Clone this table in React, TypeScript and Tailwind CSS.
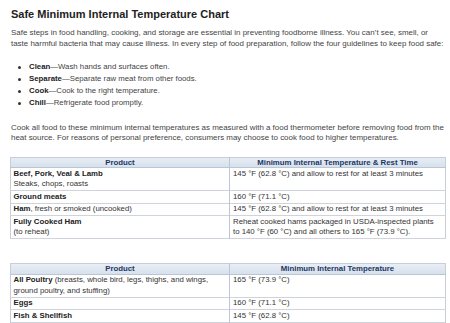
import React from "react";

const Row = ({ left, right }: { left: React.ReactNode; right: React.ReactNode }) => (
  <tr className="border-b border-[#cfd4dc]">
    <td className="w-[219px] border-r border-[#bfc4dc] px-[2.5px] pt-[0.75px] pb-[0.25px] align-top leading-[10.5px]">{left}</td>
    <td className="px-[3px] pt-[0.75px] pb-[0.25px] align-top leading-[10.5px]">{right}</td>
  </tr>
);

const Header = ({ right }: { right: string }) => (
  <tr className="border-b border-[#b9c6d6] bg-gradient-to-b from-[#e8eef5] to-[#d7e1ec]">
    <th className="w-[219px] border-r border-[#bfc4dc] py-0 text-center font-bold leading-[9.5px] text-[#1c3763]">Product</th>
    <th className="py-0 text-center font-bold leading-[9.5px] text-[#1c3763]">{right}</th>
  </tr>
);

export default function App() {
  const items: [string, string][] = [
    ["Clean", "Wash hands and surfaces often."],
    ["Separate", "Separate raw meat from other foods."],
    ["Cook", "Cook to the right temperature."],
    ["Chill", "Refrigerate food promptly."],
  ];
  return (
    <div
      className="h-[323px] w-[450px] overflow-hidden bg-white pl-[11px] text-[#3a3a3a]"
      style={{ fontFamily: '"Liberation Sans", Arial, sans-serif' }}
    >
      <h1 className="pt-[7px] text-[11px] font-bold leading-[14px] text-[#222]">Safe Minimum Internal Temperature Chart</h1>
      <p className="mt-[7px] whitespace-nowrap text-[7.95px] leading-[10.5px] text-[#444]">
        Safe steps in food handling, cooking, and storage are essential in preventing foodborne illness. You can’t see, smell, or
        <br />
        taste harmful bacteria that may cause illness. In every step of food preparation, follow the four guidelines to keep food safe:
      </p>
      <ul className="mt-[12px] text-[7.8px] leading-[12px] text-[#444]">
        {items.map(([b, t]) => (
          <li key={b} className="flex items-center">
            <span className="ml-[7px] mr-[8px] h-[3px] w-[3px] rounded-full bg-[#333]" />
            <span>
              <b className="text-[#222]">{b}</b>—{t}
            </span>
          </li>
        ))}
      </ul>
      <p className="mt-[13.5px] whitespace-nowrap text-[7.95px] leading-[10.5px] text-[#444]">
        Cook all food to these minimum internal temperatures as measured with a food thermometer before removing food from the
        <br />
        heat source. For reasons of personal preference, consumers may choose to cook food to higher temperatures.
      </p>
      <table className="-ml-[1px] mt-[13px] w-[436px] table-fixed border-collapse border border-[#c7ceda] text-[7.8px] text-[#333]">
        <tbody>
          <Header right="Minimum Internal Temperature & Rest Time" />
          <Row
            left={
              <>
                <b className="text-[#222]">Beef, Pork, Veal &amp; Lamb</b>
                <br />
                Steaks, chops, roasts
              </>
            }
            right="145 °F (62.8 °C) and allow to rest for at least 3 minutes"
          />
          <Row left={<b className="text-[#222]">Ground meats</b>} right="160 °F (71.1 °C)" />
          <Row
            left={
              <>
                <b className="text-[#222]">Ham</b>, fresh or smoked (uncooked)
              </>
            }
            right="145 °F (62.8 °C) and allow to rest for at least 3 minutes"
          />
          <Row
            left={
              <>
                <b className="text-[#222]">Fully Cooked Ham</b>
                <br />
                (to reheat)
              </>
            }
            right={
              <>
                Reheat cooked hams packaged in USDA-inspected plants
                <br />
                to 140 °F (60 °C) and all others to 165 °F (73.9 °C).
              </>
            }
          />
        </tbody>
      </table>
      <table className="-ml-[1px] mt-[24px] w-[436px] table-fixed border-collapse border border-[#c7ceda] text-[7.8px] text-[#333]">
        <tbody>
          <Header right="Minimum Internal Temperature" />
          <Row
            left={
              <>
                <b className="text-[#222]">All Poultry</b> (breasts, whole bird, legs, thighs, and wings,
                <br />
                ground poultry, and stuffing)
              </>
            }
            right="165 °F (73.9 °C)"
          />
          <Row left={<b className="text-[#222]">Eggs</b>} right="160 °F (71.1 °C)" />
          <Row left={<b className="text-[#222]">Fish &amp; Shellfish</b>} right="145 °F (62.8 °C)" />
        </tbody>
      </table>
    </div>
  );
}
